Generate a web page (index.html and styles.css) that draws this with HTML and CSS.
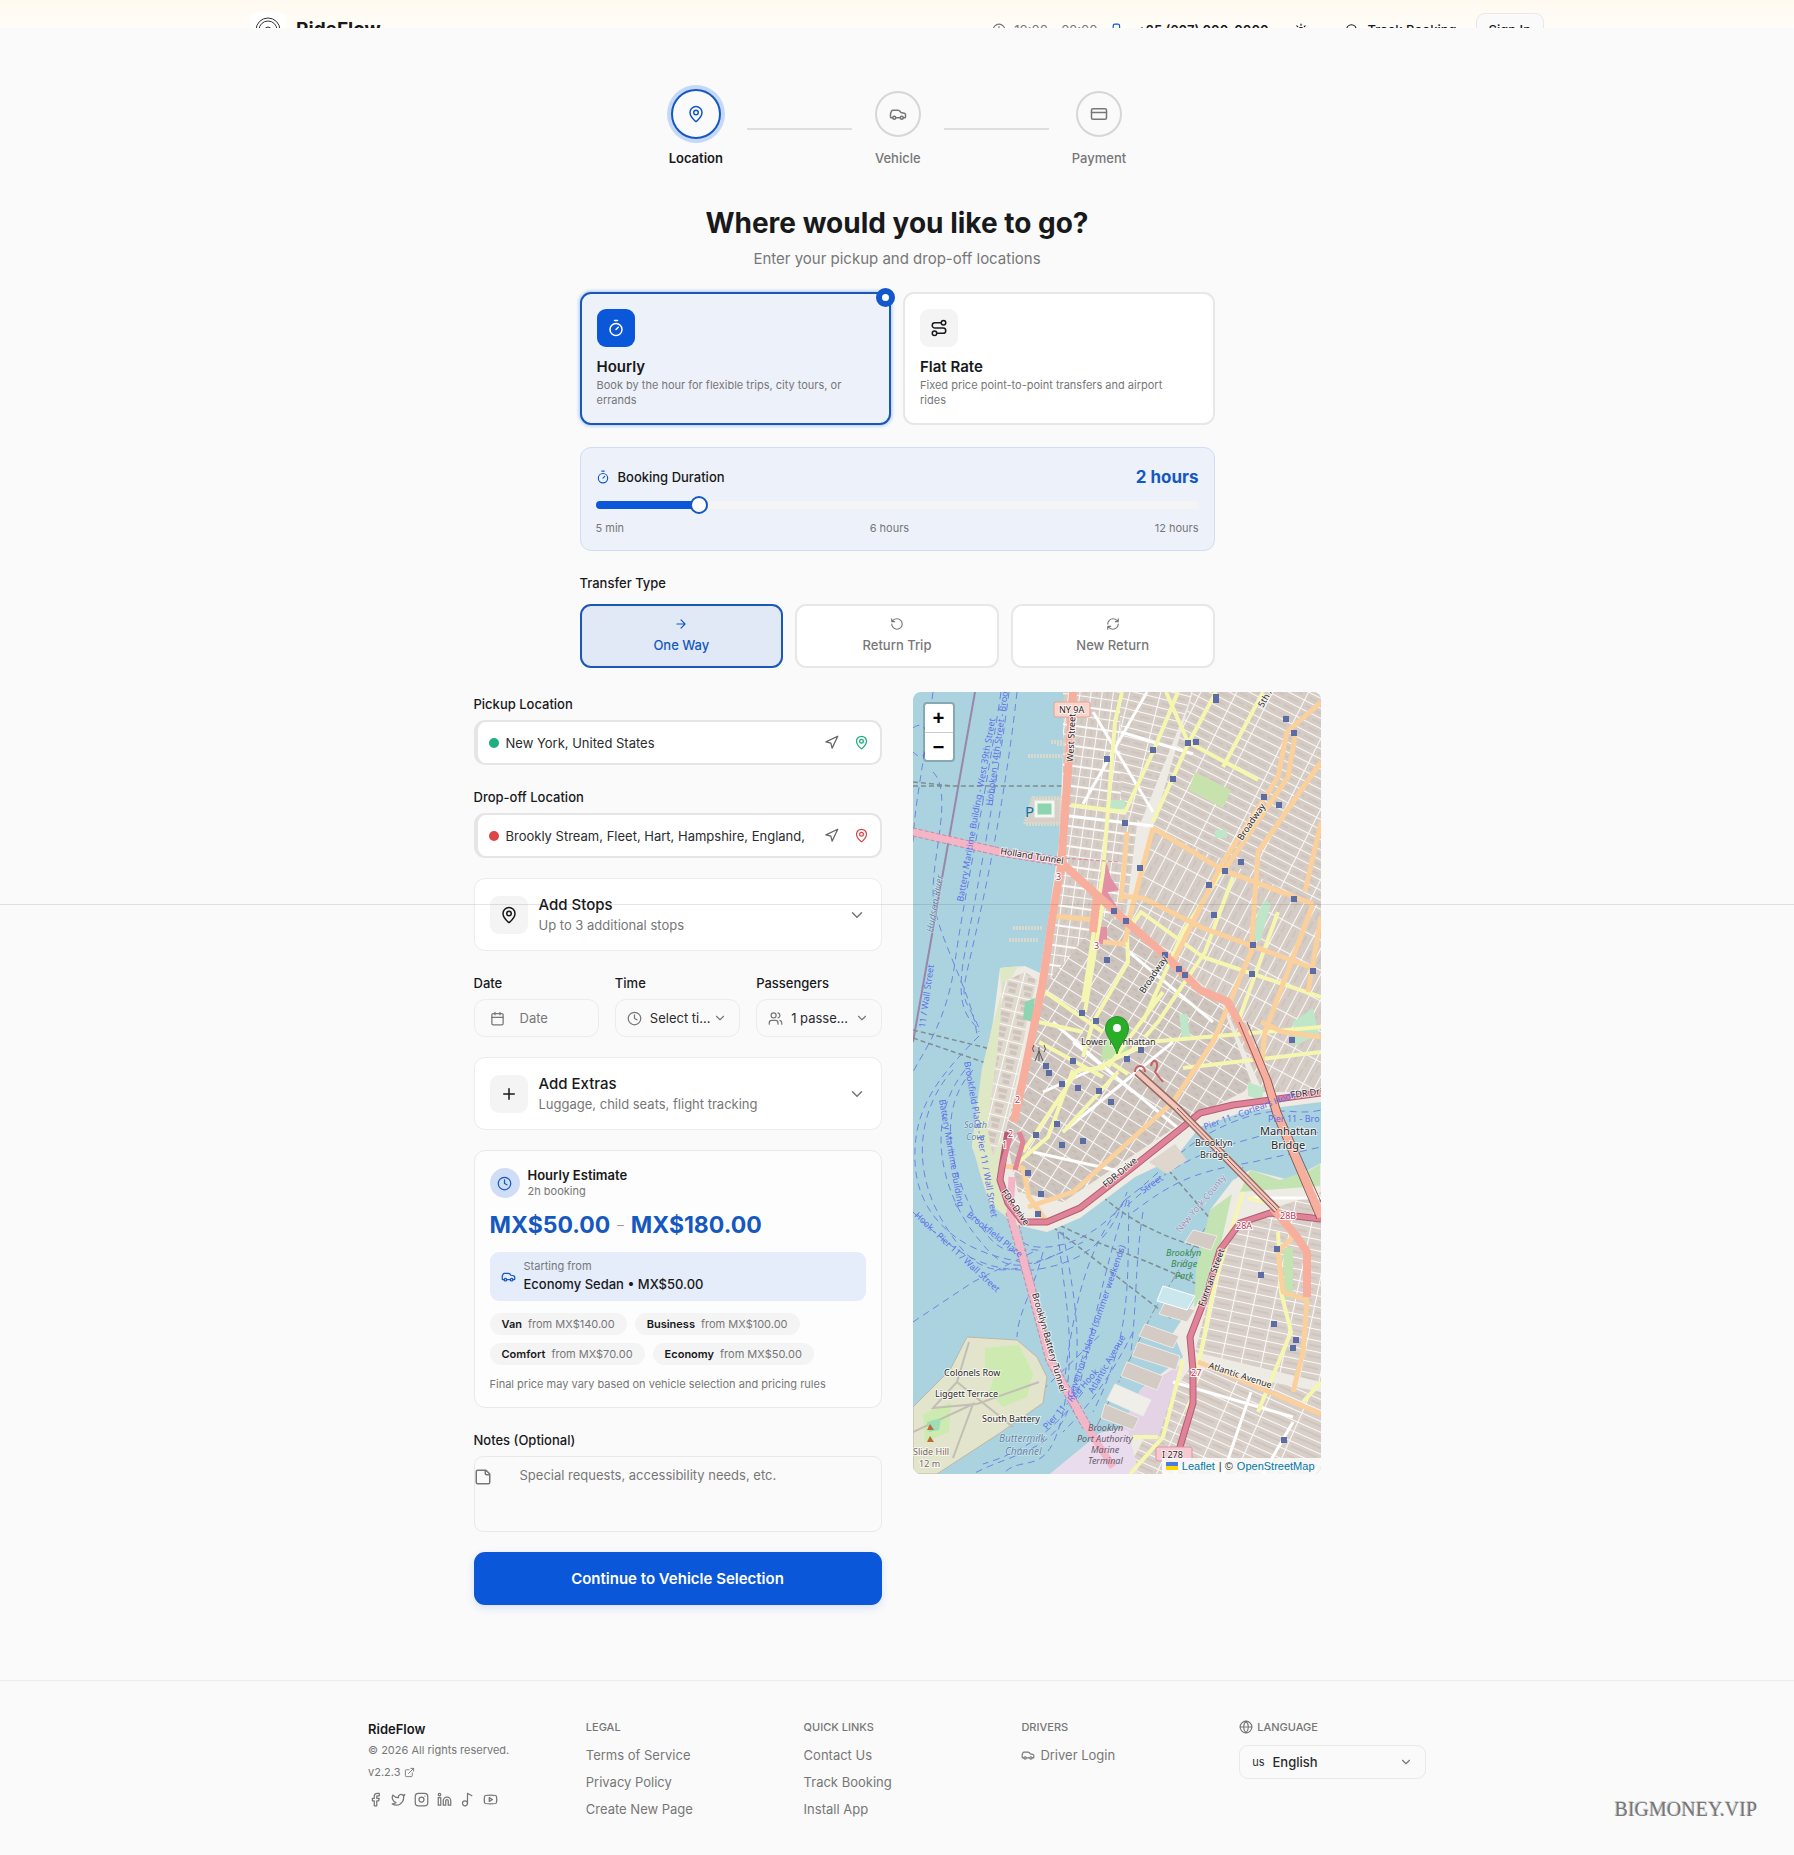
FILE: index.html
```html
<!DOCTYPE html>
<html lang="en">
<head>
<meta charset="utf-8">
<meta name="viewport" content="width=device-width, initial-scale=1">
<title>RideFlow – Book a ride</title>
<link rel="stylesheet" href="styles.css">
</head>
<body>
<svg class="sprite" aria-hidden="true">
  <symbol id="pin" viewBox="0 0 24 24"><path d="M20 10c0 4.993-5.539 10.193-7.399 11.799a1 1 0 0 1-1.202 0C9.539 20.193 4 14.993 4 10a8 8 0 0 1 16 0"/><circle cx="12" cy="10" r="3"/></symbol>
  <symbol id="car" viewBox="0 0 24 24"><path d="M19 17h2c.6 0 1-.4 1-1v-3c0-.9-.7-1.7-1.5-1.9C18.7 10.6 16 10 16 10s-1.3-1.4-2.2-2.3c-.5-.4-1.1-.7-1.8-.7H5c-.6 0-1.1.4-1.4.9l-1.4 2.9A3.7 3.7 0 0 0 2 12v4c0 .6.4 1 1 1h2M9 17h6"/><circle cx="7" cy="17" r="2"/><circle cx="17" cy="17" r="2"/></symbol>
  <symbol id="card" viewBox="0 0 24 24"><rect x="2" y="5" width="20" height="14" rx="2"/><path d="M2 10h20"/></symbol>
  <symbol id="timer" viewBox="0 0 24 24"><path d="M10 2h4M12 14l3-3"/><circle cx="12" cy="14" r="8"/></symbol>
  <symbol id="route" viewBox="0 0 24 24"><circle cx="6" cy="19" r="3"/><path d="M9 19h8.5a3.5 3.5 0 0 0 0-7h-11a3.5 3.5 0 0 1 0-7H15"/><circle cx="18" cy="5" r="3"/></symbol>
  <symbol id="arrow" viewBox="0 0 24 24"><path d="M5 12h14M12 5l7 7-7 7"/></symbol>
  <symbol id="undo" viewBox="0 0 24 24"><path d="M3 12a9 9 0 1 0 9-9 9.750 9.750 0 0 0-6.740 2.740L3 8M3 3v5h5"/></symbol>
  <symbol id="refresh" viewBox="0 0 24 24"><path d="M3 12a9 9 0 0 1 9-9 9.750 9.750 0 0 1 6.740 2.740L21 8M21 3v5h-5M21 12a9 9 0 0 1-9 9 9.750 9.750 0 0 1-6.740-2.740L3 16M8 16H3v5"/></symbol>
  <symbol id="nav" viewBox="0 0 24 24"><path d="M3 11 22 2 13 21 11 13Z"/></symbol>
  <symbol id="chevron" viewBox="0 0 24 24"><path d="m6 9 6 6 6-6"/></symbol>
  <symbol id="calendar" viewBox="0 0 24 24"><path d="M8 2v4M16 2v4M3 10h18"/><rect x="3" y="4" width="18" height="18" rx="2"/></symbol>
  <symbol id="clock" viewBox="0 0 24 24"><circle cx="12" cy="12" r="10"/><path d="M12 6v6l4 2"/></symbol>
  <symbol id="users" viewBox="0 0 24 24"><path d="M16 21v-2a4 4 0 0 0-4-4H6a4 4 0 0 0-4 4v2M22 21v-2a4 4 0 0 0-3-3.870M16 3.130a4 4 0 0 1 0 7.750"/><circle cx="9" cy="7" r="4"/></symbol>
  <symbol id="plus" viewBox="0 0 24 24"><path d="M5 12h14M12 5v14"/></symbol>
  <symbol id="note" viewBox="0 0 24 24"><path d="M16 3H5a2 2 0 0 0-2 2v14a2 2 0 0 0 2 2h14a2 2 0 0 0 2-2V8ZM15 3v4a2 2 0 0 0 2 2h4"/></symbol>
  <symbol id="phone" viewBox="0 0 24 24"><rect x="2" y="2" width="11" height="20" rx="3"/><path d="M7 18h1"/></symbol>
  <symbol id="sun" viewBox="0 0 24 24"><circle cx="12" cy="12" r="4"/><path d="M12 2v2M12 20v2M4.900 4.900l1.400 1.400M17.700 17.700l1.400 1.400M2 12h2M20 12h2M6.300 17.700l-1.400 1.400M19.100 4.900l-1.400 1.400"/></symbol>
  <symbol id="search" viewBox="0 0 24 24"><circle cx="11" cy="11" r="8"/><path d="m21 21-4.300-4.300"/></symbol>
  <symbol id="globe" viewBox="0 0 24 24"><circle cx="12" cy="12" r="10"/><path d="M12 2a14.500 14.500 0 0 0 0 20 14.500 14.500 0 0 0 0-20M2 12h20"/></symbol>
  <symbol id="external" viewBox="0 0 24 24"><path d="M15 3h6v6M10 14 21 3M18 13v6a2 2 0 0 1-2 2H5a2 2 0 0 1-2-2V8a2 2 0 0 1 2-2h6"/></symbol>
  <symbol id="facebook" viewBox="0 0 24 24"><path d="M18 2h-3a5 5 0 0 0-5 5v3H7v4h3v8h4v-8h3l1-4h-4V7a1 1 0 0 1 1-1h3z"/></symbol>
  <symbol id="twitter" viewBox="0 0 24 24"><path d="M22 4s-.7 2.100-2 3.400c1.600 10-9.400 17.300-18 11.600 2.200.1 4.400-.6 6-2C3 15.500.5 9.600 3 5c2.200 2.600 5.600 4.100 9 4-.9-4.200 4-6.600 7-3.800 1.100 0 3-1.200 3-1.200z"/></symbol>
  <symbol id="instagram" viewBox="0 0 24 24"><rect x="2" y="2" width="20" height="20" rx="5"/><circle cx="12" cy="12" r="4"/><path d="M17.500 6.500h.01"/></symbol>
  <symbol id="linkedin" viewBox="0 0 24 24"><path d="M16 8a6 6 0 0 1 6 6v7h-4v-7a2 2 0 0 0-4 0v7h-4v-7a6 6 0 0 1 6-6z"/><rect x="2" y="9" width="4" height="12"/><circle cx="4" cy="4" r="2"/></symbol>
  <symbol id="music" viewBox="0 0 24 24"><circle cx="8" cy="18" r="4"/><path d="M12 18V2l7 4"/></symbol>
  <symbol id="youtube" viewBox="0 0 24 24"><path d="M2.500 17a24 24 0 0 1 0-10 2 2 0 0 1 1.400-1.400 50 50 0 0 1 16.200 0A2 2 0 0 1 21.500 7a24 24 0 0 1 0 10 2 2 0 0 1-1.400 1.400 50 50 0 0 1-16.200 0A2 2 0 0 1 2.500 17M10 15l5-3-5-3z"/></symbol>
</svg>

<header class="topbar">
  <div class="topbar-inner">
    <a class="brand" href="#">
      <span class="brand-mark"><svg viewBox="0 0 26 26"><circle cx="13" cy="13" r="12"/><circle cx="13" cy="13" r="9"/><circle cx="13" cy="13" r="3"/></svg></span>
      RideFlow
    </a>
    <div class="topbar-info">
      <span class="hours"><svg class="i14"><use href="#clock"/></svg>10:00 - 02:00</span>
      <a class="tel" href="#"><svg class="i14"><use href="#phone"/></svg>+25 (607) 000-0000</a>
      <button class="ghost" type="button" aria-label="Theme"><svg class="i14"><use href="#sun"/></svg></button>
      <a class="track" href="#"><svg class="i14"><use href="#search"/></svg>Track Booking</a>
      <a class="signin" href="#">Sign In</a>
    </div>
  </div>
</header>

<main>
  <ol class="stepper">
    <li class="step current"><span class="slot"><span class="bubble"><svg class="i18"><use href="#pin"/></svg></span></span>Location</li>
    <li class="bar"></li>
    <li class="step"><span class="slot"><span class="bubble"><svg class="i18"><use href="#car"/></svg></span></span>Vehicle</li>
    <li class="bar"></li>
    <li class="step"><span class="slot"><span class="bubble"><svg class="i18"><use href="#card"/></svg></span></span>Payment</li>
  </ol>

  <h1>Where would you like to go?</h1>
  <p class="lead">Enter your pickup and drop-off locations</p>

  <section class="options">
    <div class="modes">
      <button class="mode selected" type="button">
        <span class="tile"><svg class="i18"><use href="#timer"/></svg></span>
        <span class="mode-name">Hourly</span>
        <span class="mode-text">Book by the hour for flexible trips, city tours, or errands</span>
        <span class="tick"></span>
      </button>
      <button class="mode" type="button">
        <span class="tile"><svg class="i18"><use href="#route"/></svg></span>
        <span class="mode-name">Flat Rate</span>
        <span class="mode-text">Fixed price point-to-point transfers and airport rides</span>
      </button>
    </div>

    <div class="duration">
      <div class="duration-head">
        <label for="dur"><svg class="i14"><use href="#timer"/></svg>Booking Duration</label>
        <output for="dur">2 hours</output>
      </div>
      <input id="dur" type="range" min="5" max="720" step="5" value="120">
      <div class="scale"><span>5 min</span><span>6 hours</span><span>12 hours</span></div>
    </div>

    <h2 class="group-label">Transfer Type</h2>
    <div class="transfers">
      <button class="transfer selected" type="button"><svg class="i14"><use href="#arrow"/></svg>One Way</button>
      <button class="transfer" type="button"><svg class="i14"><use href="#undo"/></svg>Return Trip</button>
      <button class="transfer" type="button"><svg class="i14"><use href="#refresh"/></svg>New Return</button>
    </div>
  </section>

  <div class="columns">
    <form class="trip">
      <div class="field">
        <label for="from">Pickup Location</label>
        <div class="place from">
          <span class="dot"></span>
          <input id="from" type="text" value="New York, United States">
          <button type="button" aria-label="Use my location"><svg class="i15"><use href="#nav"/></svg></button>
          <button class="pick" type="button" aria-label="Pick on map"><svg class="i15"><use href="#pin"/></svg></button>
        </div>
      </div>
      <div class="field">
        <label for="to">Drop-off Location</label>
        <div class="place to">
          <span class="dot"></span>
          <input id="to" type="text" value="Brookly Stream, Fleet, Hart, Hampshire, England, United Kingdom">
          <button type="button" aria-label="Use my location"><svg class="i15"><use href="#nav"/></svg></button>
          <button class="pick" type="button" aria-label="Pick on map"><svg class="i15"><use href="#pin"/></svg></button>
        </div>
      </div>

      <button class="expander" type="button">
        <span class="tile"><svg class="i18"><use href="#pin"/></svg></span>
        <span class="expander-text"><strong>Add Stops</strong><span>Up to 3 additional stops</span></span>
        <svg class="i18"><use href="#chevron"/></svg>
      </button>

      <div class="when">
        <div class="field">
          <label for="date">Date</label>
          <div class="box date"><svg class="i15"><use href="#calendar"/></svg><input id="date" type="text" placeholder="Date"></div>
        </div>
        <div class="field">
          <label for="time">Time</label>
          <div class="box"><svg class="i15"><use href="#clock"/></svg><select id="time"><option>Select time</option></select><svg class="i14 caret"><use href="#chevron"/></svg></div>
        </div>
        <div class="field">
          <label for="pax">Passengers</label>
          <div class="box"><svg class="i15"><use href="#users"/></svg><select id="pax"><option>1 passenger</option></select><svg class="i14 caret"><use href="#chevron"/></svg></div>
        </div>
      </div>

      <button class="expander" type="button">
        <span class="tile"><svg class="i18"><use href="#plus"/></svg></span>
        <span class="expander-text"><strong>Add Extras</strong><span>Luggage, child seats, flight tracking</span></span>
        <svg class="i18"><use href="#chevron"/></svg>
      </button>

      <section class="estimate">
        <div class="estimate-head">
          <span class="disc"><svg class="i15"><use href="#clock"/></svg></span>
          <div><h3>Hourly Estimate</h3><p>2h booking</p></div>
        </div>
        <p class="price"><b>MX$50.00</b><span>–</span><b>MX$180.00</b></p>
        <div class="starting">
          <svg class="i15"><use href="#car"/></svg>
          <div><p>Starting from</p><strong>Economy Sedan • MX$50.00</strong></div>
        </div>
        <ul class="chips">
          <li><b>Van</b>from MX$140.00</li>
          <li><b>Business</b>from MX$100.00</li>
          <li><b>Comfort</b>from MX$70.00</li>
          <li><b>Economy</b>from MX$50.00</li>
        </ul>
        <p class="fine">Final price may vary based on vehicle selection and pricing rules</p>
      </section>

      <div class="field notes">
        <label for="notes">Notes (Optional)</label>
        <div class="notes-box">
          <svg class="i18"><use href="#note"/></svg>
          <textarea id="notes" placeholder="Special requests, accessibility needs, etc."></textarea>
        </div>
      </div>

      <button class="submit" type="submit">Continue to Vehicle Selection</button>
    </form>

    <div class="map">
      <svg class="tiles" viewBox="0 0 408 782" preserveAspectRatio="xMidYMid slice">
        <defs>
          <pattern id="west" width="11" height="20" patternUnits="userSpaceOnUse" patternTransform="rotate(8)"><rect width="11" height="20" fill="#d5ccc6"/><path d="M0 0H11M0 0V20M0 11H11" stroke="#fbfaf8" stroke-width="2"/><path d="M6 3V8M6 13V18" stroke="#c8bcb4"/></pattern>
          <pattern id="village" width="30" height="9" patternUnits="userSpaceOnUse" patternTransform="rotate(14)"><rect width="30" height="9" fill="#d5ccc6"/><path d="M0 0H30M0 0V9" stroke="#fbfaf8" stroke-width="2"/><path d="M4 5H12M16 5H26" stroke="#c8bcb4"/></pattern>
          <pattern id="east" width="32" height="9" patternUnits="userSpaceOnUse" patternTransform="rotate(27)"><rect width="32" height="9" fill="#d5ccc6"/><path d="M0 0H32M0 0V9" stroke="#fbfaf8" stroke-width="2"/><path d="M4 5H12M16 5H28" stroke="#c8bcb4"/></pattern>
          <pattern id="soho" width="12" height="27" patternUnits="userSpaceOnUse" patternTransform="rotate(28)"><rect width="12" height="27" fill="#d5ccc6"/><path d="M0 0H12M0 0V27" stroke="#fbfaf8" stroke-width="2"/><path d="M6 4V12M5 15V24" stroke="#c8bcb4"/></pattern>
          <pattern id="fidi" width="17" height="13" patternUnits="userSpaceOnUse" patternTransform="rotate(32)"><rect width="17" height="13" fill="#cec4be"/><path d="M0 0H17M0 0V13" stroke="#fbfaf8" stroke-width="2"/><path d="M4 5H8M10 9H14" stroke="#bfb3ab"/></pattern>
          <pattern id="battery" width="16" height="15" patternUnits="userSpaceOnUse" patternTransform="rotate(14)"><rect width="16" height="15" fill="#dfd9cf"/><path d="M3 3h9v4H3zM5 9h7v4H5z" fill="#cfc4bc"/><path d="M0 0H16M0 0V15" stroke="#fbfaf8" stroke-width="2"/></pattern>
          <pattern id="heights" width="20" height="11" patternUnits="userSpaceOnUse" patternTransform="rotate(12)"><rect width="20" height="11" fill="#d8cfc9"/><path d="M0 0H20M0 0V11" stroke="#fbfaf8" stroke-width="2"/><path d="M3 6H17" stroke="#c8bcb4"/></pattern>
          <pattern id="cobble" width="36" height="10" patternUnits="userSpaceOnUse" patternTransform="rotate(24)"><rect width="36" height="10" fill="#d8cfc9"/><path d="M0 0H36M0 0V10" stroke="#fbfaf8" stroke-width="2"/><path d="M4 5H32" stroke="#c8bcb4"/></pattern>
        </defs>
        <rect width="408" height="782" fill="#aad3df"/>

        <!-- Hudson and East River ferry lines -->
        <g class="ferry">
          <path d="M20 0C8 90 2 110 0 150M88 0C70 120 50 210 42 270S10 360 0 380M96 0C86 80 66 190 52 260S66 330 66 340M104 0C92 110 70 210 58 262S50 300 66 336M20 80C40 100 20 160 20 200S60 300 64 344M0 36C20 20 20 80 0 60M66 344C20 390 0 420 2 470S40 560 110 570"/>
          <path d="M60 378C30 410 30 460 60 520S110 550 130 560M52 378C10 430 30 500 60 540S100 580 150 560M40 378C10 410-6 470 30 530S90 590 170 550M0 520C40 560 70 580 120 578 180 570 200 540 214 500M0 630 60 590 120 560M212 508C170 560 160 620 150 700M214 508C190 580 180 640 160 720M216 508C214 590 220 640 180 720M210 512C170 560 120 560 110 550"/>
          <path d="M150 540C160 600 170 640 160 700S100 760 60 782M145 540C150 600 165 650 150 720S110 760 90 782M212 508C250 480 270 450 320 430S380 425 408 418M214 514C260 470 290 460 340 446S390 444 408 440M220 520C260 490 280 480 340 470L408 455M130 560C120 600 105 620 104 645M220 640C200 680 180 710 150 740M170 700C140 740 110 760 70 772M230 520C222 570 224 610 218 660M86 740 190 640"/>
        </g>
        <path d="M62 0 0 350" stroke="#9a86ab" stroke-width="2"/>
        <g fill="none" stroke="#7f8c93" stroke-width="1.500" stroke-dasharray="5 3"><path d="M0 90 40 94H150M0 94H150M0 338 70 355 120 370M0 346 70 370 110 390M140 530C200 560 220 560 300 600M140 535 260 628M190 505C230 540 270 550 300 560M240 460 300 530"/></g>
        <path d="M330 475 240 620 180 742" fill="none" stroke="#8b91a2" stroke-dasharray="10 3 2 3"/>

        <!-- Manhattan -->
        <path d="M150 0H408V410L330 420 287 435 262 466 222 485 167 526 134 540 100 532 77 508 67 475 59 455 65 411 72 370 80 330 87 276 112 274 127 281 137 215 146 150 150 60Z" fill="#eeebe4"/>
        <path d="M150 0H260L228 100 212 230 190 320 120 320 140 215 150 150Z" fill="url(#west)"/>
        <path d="M207 0H280L228 130 208 120Z" fill="url(#village)"/>
        <path d="M280 0H408V240L300 180 240 135 262 60Z" fill="url(#east)"/>
        <path d="M240 135 408 215V400L350 400 310 310 214 230Z" fill="url(#soho)"/>
        <path d="M190 225 214 230 310 315 340 395 270 430 150 510 105 500 92 440 134 290Z" fill="url(#fidi)"/>
        <path d="M282 80l36 18-8 18-34-18z" fill="#c8e2ae"/><g fill="#bfe6c8"><path d="M197 108h15v9h-15zM266 322h8l3 22-8 2zM345 220l7-12 6 4-11 38-7-4zM380 330l20-14 6 26-24 12zM302 138h12v8h-12zM335 390l16 6-2 12-14-4z"/><path d="M190 350l14-8 12 8-4 16-24 2z" fill="#bfe3a8"/><path d="M87 276l18-2-18 32-8 30-10 40-4 30-6 46 8 30 10 30 28 22-4-20-14-30 6-80z" fill="#dfe8c5"/></g>
        <path d="M90 290l22-10 12 8-10 40-8 50-14 60-12 26-6-30 10-70z" fill="url(#battery)"/>
        <path d="M112 310l10-4-3 24-9-3z" fill="#8dd4b0"/>
        <path d="M180 235h14v17h-14z" fill="#e290a5"/><path d="M188 178l6-6 4 14 8 12-20 4zM182 204l10-8 14 22-6 4z" fill="#e290a5"/>
        <path d="M120 106h28v26h-36zM144 52h16M115 64h34M100 236h30M96 248h30M138 50h12" fill="#d6d0c8" stroke="#ddd8cc" stroke-width="4" stroke-dasharray="2 1"/>
        <path d="M123 110h17v14h-17z" fill="#8dd4b0" stroke="#f4f6f2" stroke-width="3"/>
        <path d="M236 470l26-18 12 16-20 14z" fill="#dfd6cd"/>

        <!-- Brooklyn -->
        <path d="M408 471 377 488 337 478 320 488 297 518 307 538 294 578 280 611 260 641 270 665 227 698 217 735 187 741 137 782H408Z" fill="#eeebe4"/>
        <path d="M322 530 408 500V690L282 660 300 590Z" fill="url(#heights)"/>
        <path d="M278 674 408 700V782H212L240 730Z" fill="url(#cobble)"/>
        <path d="M227 698 268 672 244 750 205 742Z" fill="#e4d3e4"/><path d="M187 741 215 738 226 782H137Z" fill="#e9dced"/>
        <path d="M297 518l22-16-20 90-18 24 2-40z" fill="#c4e3b2"/>
        <g fill="#d4cbc4" stroke="#eeeae6"><path d="M225 650l42 14-4 14-44-14zM214 670l36 14-6 14-36-14z"/><path d="M202 692l36 16-8 16-36-16z" fill="#f0eee9"/><path d="M192 712l34 14-6 12-32-12zM252 610l30 8-8 12-28-8zM232 632l34 12-6 12-34-12zM280 538l24 6-6 14-26-8z"/></g>
        <path d="M250 594l32 10-8 14-30-9z" fill="#cbe7ee" stroke="#fff"/>
        <path d="M337 478l30 10 30-10 10-6v22l-80 6zM370 556h10v50h-8z" fill="#c4e3b2"/>

        <!-- Governors Island -->
        <path d="M54 645 104 648 124 665 134 685 130 711 87 741 24 782H0V715L37 678Z" fill="#e2e5cb" stroke="#bcb6aa"/>
        <path d="M72 656l34-3 14 28-6 24-24 10-14-14 6-20-10-6zM10 722l28-12-2 30-24 10z" fill="#cdebb0"/>
        <path d="M56 650 44 690 20 716 64 712 126 690M44 690 100 735M0 740 60 712 40 766" fill="none" stroke="#c2bdb5" stroke-width="2"/>
        <path d="M14 730l14-4-2 12-10 2z" fill="#9fdcb8"/>

        <!-- Streets -->
        <g class="street"><path d="M156 124 240 134M234 0 170 112M180 20 240 120M208 40 280 62M216 260 300 330M140 330 220 400M130 400 240 350M150 440 260 350M120 460 210 480M160 350 270 440M338 700 310 782M380 730 350 782M260 690 380 725M340 506H408"/></g>
        <g class="minor"><path d="M209 0 202 30 190 180 170 310M253 0 275 50 345 88M265 0 240 60 212 120 158 113M303 0 275 52 240 130M350 0 310 75M310 178 270 240 230 330M320 185 292 260 245 330 232 345M214 240 228 220 290 265 408 305M214 242 215 270 180 330 170 365M132 300 190 340M126 330 170 340M126 350 190 385M180 378 235 350 408 335M270 376 408 360M365 220 325 330M190 210 172 320M250 300 195 375M192 376 165 378 110 460M160 378 135 445 100 475M205 380 150 440M200 372 215 382"/><path d="M330 500 302 590 290 650 262 782M335 506 360 512M365 540 368 600 378 640 345 720M270 668 250 745 217 782M220 745H245M408 690 390 710"/></g>
        <g class="secondary"><path d="M408 10 374 40 365 85 310 170 260 270M382 44 375 85 310 180M240 136 310 178 400 212M240 136 218 220 212 250M214 140 208 210M206 204 230 206 290 236 400 276M400 212 352 340 348 378M408 70 345 160 338 260 300 350 260 410 160 500 115 515M408 130 392 200M140 224 182 228M89 474 110 476 116 505 134 530M348 330 370 340 408 345M190 250 212 252M408 225 395 300"/><path d="M365 518 380 545 365 560 370 600 394 608 390 660 380 700M285 670 310 680 408 722"/></g>
        <path d="M99 485 97 521 114 581 137 668 174 735 200 775" class="tunnel"/><path d="M0 140 37 148 87 160 150 170" class="tunnel"/>
        <path d="M0 136 87 156 150 166 206 170M0 144 87 164 150 174" class="tunnel-edge"/><path d="M103 521 118 580 141 667 178 733M93 521 110 582 133 669 170 737" class="tunnel-edge"/>
        <g class="motor-edge"><path d="M95 440 89 475 87 488 95 511 110 530 134 530 167 516 220 475 270 435 287 421 320 413 408 401"/><path d="M264 765 280 711 280 678 277 645 294 601 307 558 327 531 357 521 408 527"/></g>
        <g class="motor"><path d="M97 445 89 475 87 488 95 511 110 530 134 530 167 516 220 475 270 435 287 421 320 413 408 401"/><path d="M264 765 280 711 280 678 277 645 294 601 307 558 327 531 357 521 408 527"/><path d="M106 440 110 450 102 478"/></g>
        <g class="trunk"><path d="M160 0 156 65 150 148 148 175 140 221 129 295 112 378 101 430"/><path d="M150 172 184 203 214 230 254 265 287 298 315 310 330 338 354 388 364 421 408 525"/><path d="M184 203 180 240M360 516 384 545 394 560V605"/></g>
        <path d="M326 330 350 388 360 423 404 527M334 330 358 388 368 420 408 510" fill="none" stroke="#8a5a55"/>
        <path d="M224 380 264 416 364 518" stroke="#986a62" stroke-width="8" fill="none"/><path d="M224 380 264 416 364 518" stroke="#f3c7bc" stroke-width="5" fill="none"/><path d="M264 416 364 518" stroke="#885c57" fill="none"/>
        <path d="M222 380c0-8 10-8 10 0M238 374c2-10 10-4 4 6l8 10" fill="none" stroke="#c65f62" stroke-width="2"/>

        <!-- Subway entrances -->
        <path class="subway" d="M300 2h6v9h-6zM191 64h6v6h-6zM237 55h6v6h-6zM272 48h6v6h-6zM280 47h6v6h-6zM257 84h6v6h-6zM370 24h6v6h-6zM378 38h6v6h-6zM348 102h6v6h-6zM363 110h6v6h-6zM209 128h6v6h-6zM224 173h6v6h-6zM293 190h6v6h-6zM309 176h6v6h-6zM325 167h6v6h-6zM378 204h6v6h-6zM298 220h6v6h-6zM198 216h6v6h-6zM210 226h6v6h-6zM249 260h6v6h-6zM263 274h6v6h-6zM269 280h6v6h-6zM191 265h6v6h-6zM337 250h6v6h-6zM336 279h6v6h-6zM397 276h6v6h-6zM166 318h6v6h-6zM180 326h6v6h-6zM376 345h6v6h-6zM211 364h6v6h-6zM225 355h6v6h-6zM157 366h6v6h-6zM130 371h6v6h-6zM133 378h6v6h-6zM146 389h6v6h-6zM162 393h6v6h-6zM183 396h6v6h-6zM195 407h6v6h-6zM141 429h6v6h-6zM120 440h6v6h-6zM146 450h6v6h-6zM167 446h6v6h-6zM112 478h6v6h-6zM125 499h6v6h-6zM122 519h6v6h-6zM361 554h6v6h-6zM345 580h6v6h-6zM358 629h6v6h-6zM380 645h6v6h-6zM377 653h6v6h-6zM368 745h6v6h-6z"/>

        <!-- Labels -->
        <rect x="141" y="10" width="36" height="15" rx="2" fill="#fbd5cb" stroke="#e2a596"/><rect x="243" y="755" width="36" height="14" rx="2" fill="#f6c8d2" stroke="#d995a6"/>
        <g class="names">
          <text x="146" y="21">NY 9A</text><text x="249" y="766">I 278</text>
          <text transform="translate(160 70) rotate(-87)">West Street</text>
          <text transform="translate(87 162) rotate(9)">Holland Tunnel</text>
          <text transform="translate(329 149) rotate(-56)">Broadway</text>
          <text transform="translate(231 302) rotate(-56)">Broadway</text>
          <text transform="translate(350 16) rotate(-60)">5th Ave</text>
          <text x="168" y="353">Lower Manhattan</text>
          <text transform="translate(193 496) rotate(-40)">FDR Drive</text>
          <text transform="translate(88 500) rotate(55)">FDR Drive</text>
          <text transform="translate(378 406) rotate(-7)">FDR Drive</text>
          <text transform="translate(119 602) rotate(74)">Brooklyn-Battery Tunnel</text>
          <text transform="translate(291 615) rotate(-70)">Furman Street</text>
          <text transform="translate(295 676) rotate(18)">Atlantic Avenue</text>
          <text x="31" y="684">Colonels Row</text><text x="22" y="705">Liggett Terrace</text><text x="69" y="730">South Battery</text>
          <text x="282" y="454">Brooklyn</text><text x="287" y="466">Bridge</text>
          <text x="0" y="763" class="soft">Slide Hill</text><text x="6" y="775" class="soft">12 m</text>
          <text x="347" y="443" class="big">Manhattan</text><text x="358" y="457" class="big">Bridge</text>
        </g>
        <g class="red"><text x="143" y="188">3</text><text x="181" y="257">3</text><text x="102" y="411">2</text><text x="95" y="445">2</text><text x="89" y="456">1</text><text x="323" y="537">28A</text><text x="367" y="527">28B</text><text x="278" y="684">27</text></g>
        <g class="water"><text transform="translate(20 241) rotate(-80)" class="big">Hudson River</text><text x="51" y="436">South</text><text x="53" y="448">Cove</text><text x="86" y="750" class="big">Buttermilk</text><text x="92" y="763" class="big">Channel</text><text transform="translate(267 541) rotate(-50)" class="county">New York County</text></g>
        <g class="park"><text x="253" y="564">Brooklyn</text><text x="258" y="575">Bridge</text><text x="262" y="587">Park</text></g>
        <g class="works"><text x="175" y="739">Brooklyn</text><text x="164" y="750">Port Authority</text><text x="178" y="761">Marine</text><text x="175" y="772">Terminal</text></g>
        <g class="route-name">
          <text transform="translate(50 210) rotate(-80)">Battery Maritime Building - West 39th Street</text>
          <text transform="translate(79 114) rotate(-82)">Hoboken 14th Street - Brookfield</text>
          <text transform="translate(12 336) rotate(-82)">11 / Wall Street</text>
          <text transform="translate(26 408) rotate(80)">Battery Maritime Building</text>
          <text transform="translate(51 370) rotate(80)">Brookfield Place - Pier 11 / Wall Street</text>
          <text transform="translate(53 524) rotate(38)">Brookfield Place</text>
          <text transform="translate(1 524) rotate(43)">Hook - Pier 11 / Wall Street</text>
          <text transform="translate(160 706) rotate(-71)">Governors Island (summer weekends)</text>
          <text transform="translate(180 702) rotate(-60)">Atlantic Avenue</text>
          <text transform="translate(134 738) rotate(-48)">Pier 11 - Red Hook</text>
          <text transform="translate(292 438) rotate(-20)">Pier 11 - Corlears Hook</text>
          <text x="355" y="430">Pier 11 - Bro</text>
          <text transform="translate(230 502) rotate(-35)">Street</text>
        </g>
        <text x="112" y="125" fill="#0b76ad" font-size="15">P</text>
        <g fill="#b96c35"><path d="M14 738l3-6 4 6zM14 750l3-6 4 6z"/></g>
        <path d="M126 355v14M122 369l4-10 4 10M121 353q-3 4 0 7M131 353q3 4 0 7" stroke="#555" fill="none"/>

        <!-- Pickup marker -->
        <path d="M204 362C201 350 192.500 346 192.500 336a11.500 11.500 0 0 1 23 0C215.500 346 207 350 204 362Z" fill="#2aad27" stroke="#24922a"/><circle cx="204" cy="336" r="4" fill="#fff"/>
      </svg>
      <div class="zoom-control"><button type="button" aria-label="Zoom in">+</button><button type="button" aria-label="Zoom out">−</button></div>
      <div class="credit"><svg viewBox="0 0 12 8"><path fill="#4C7BE1" d="M0 0h12v4H0z"/><path fill="#FFD500" d="M0 4h12v4H0z"/></svg><a href="#">Leaflet</a> | © <a href="#">OpenStreetMap</a></div>
    </div>
  </div>
</main>

<footer>
  <div class="foot">
    <div class="about">
      <strong>RideFlow</strong>
      <p>© 2026 All rights reserved.</p>
      <a class="version" href="#">v2.2.3 <svg class="i11"><use href="#external"/></svg></a>
      <div class="social">
        <a href="#" aria-label="Facebook"><svg class="i15"><use href="#facebook"/></svg></a>
        <a href="#" aria-label="Twitter"><svg class="i15"><use href="#twitter"/></svg></a>
        <a href="#" aria-label="Instagram"><svg class="i15"><use href="#instagram"/></svg></a>
        <a href="#" aria-label="LinkedIn"><svg class="i15"><use href="#linkedin"/></svg></a>
        <a href="#" aria-label="TikTok"><svg class="i15"><use href="#music"/></svg></a>
        <a href="#" aria-label="YouTube"><svg class="i15"><use href="#youtube"/></svg></a>
      </div>
    </div>
    <nav><h4>LEGAL</h4><a href="#">Terms of Service</a><a href="#">Privacy Policy</a><a href="#">Create New Page</a></nav>
    <nav><h4>QUICK LINKS</h4><a href="#">Contact Us</a><a href="#">Track Booking</a><a href="#">Install App</a></nav>
    <nav><h4>DRIVERS</h4><a href="#"><svg class="i14"><use href="#car"/></svg>Driver Login</a></nav>
    <div class="lang">
      <h4><svg class="i14"><use href="#globe"/></svg><label for="lang">LANGUAGE</label></h4>
      <div class="lang-box"><span>us</span><select id="lang"><option>English</option></select><svg class="i14"><use href="#chevron"/></svg></div>
    </div>
  </div>
</footer>
<div class="seam"></div>
<div class="stamp">BIGMONEY.VIP</div>
</body>
</html>
```
FILE: styles.css
```css
* { box-sizing: border-box; }
body, h1, h2, h3, h4, p, ul, ol { margin: 0; padding: 0; }
body {
  position: relative;
  background: #fafafa;
  color: #18191b;
  font-family: Inter, "Liberation Sans", sans-serif;
  font-size: 13px;
  line-height: 20px;
}
a { color: inherit; text-decoration: none; }
ul, ol { list-style: none; }
button, input, select, textarea { font: inherit; color: inherit; }
button { background: none; border: 0; padding: 0; cursor: pointer; }
input, select, textarea { min-width: 0; border: 0; padding: 0; background: transparent; outline: 0; }
select { appearance: none; text-overflow: ellipsis; overflow: hidden; white-space: nowrap; }
svg { display: block; flex: none; }
.sprite { display: none; }
.i11, .i14, .i15, .i18 { fill: none; stroke: currentColor; stroke-width: 2; stroke-linecap: round; stroke-linejoin: round; }
.i11 { width: 11px; height: 11px; }
.i14 { width: 14px; height: 14px; }
.i15 { width: 15px; height: 15px; }
.i18 { width: 18px; height: 18px; }

/* Top bar */
.topbar { height: 28px; overflow: hidden; background: linear-gradient(#fff9f0, #fffdf8); }
.topbar-inner { display: flex; align-items: center; justify-content: space-between; max-width: 1294px; height: 60px; margin: 0 auto; }
.brand { display: flex; align-items: center; gap: 10px; font-size: 19px; font-weight: 700; }
.brand-mark { display: grid; place-items: center; width: 36px; height: 36px; border-radius: 8px; background: #fff; }
.brand-mark svg { width: 26px; height: 26px; fill: none; stroke: #333; }
.topbar-info { display: flex; align-items: center; font-weight: 600; }
.topbar-info > * { display: flex; align-items: center; }
.hours { gap: 8px; color: #777; font-weight: 400; }
.tel { gap: 11px; margin-left: 15px; }
.tel svg { color: #0b57d9; }
.ghost { margin-left: 25px; }
.track { gap: 9px; margin-left: 37px; font-weight: 500; }
.signin { height: 34px; margin-left: 19px; padding: 0 12px; border: 1px solid #e8e8e8; border-radius: 9px; background: #fafafa; font-weight: 500; }

main { padding: 61px 24px 75px; }

/* Stepper */
.stepper { display: flex; align-items: center; justify-content: center; gap: 23px; }
.step { display: flex; flex-direction: column; align-items: center; gap: 9px; color: #777; font-weight: 500; }
.slot { display: grid; place-items: center; height: 50px; }
.bubble { display: grid; place-items: center; width: 46px; height: 46px; border: 2px solid #d6d6d6; border-radius: 50%; }
.current { color: #18191b; font-weight: 600; }
.current .slot { width: 56px; }
.current .bubble { width: 50px; height: 50px; border-color: #1558c0; background: #fafafa; color: #1558c0; box-shadow: 0 0 0 4px #c5d8f8; }
.bar { width: 105px; height: 2px; background: #dedede; }

h1 { margin-top: 37px; font-size: 28px; line-height: 36px; font-weight: 700; text-align: center; }
.lead { margin-top: 6px; color: #777; font-size: 15px; line-height: 24px; text-align: center; }

/* Ride mode, duration, transfer */
.options { max-width: 635px; margin: 21px auto 0; }
.modes { display: grid; grid-template-columns: 1fr 1fr; gap: 12px; }
.mode { position: relative; display: flex; flex-direction: column; align-items: flex-start; padding: 15px; border: 2px solid #e7e7e7; border-radius: 11px; background: #fff; text-align: left; }
.tile { display: grid; place-items: center; flex: none; width: 38px; height: 38px; border-radius: 9px; background: #f4f4f5; }
.mode-name { margin-top: 10px; font-size: 15px; font-weight: 600; }
.mode-text { max-width: 264px; margin-top: 1px; color: #777; font-size: 11px; line-height: 15px; }
.mode.selected { border-color: #1a58b8; background: #edf1fa; box-shadow: 0 0 4px #7fb0f5; }
.selected .tile { background: #0b57d9; color: #fff; }
.tick { position: absolute; top: -6px; right: -6px; width: 19px; height: 19px; border: 6px solid #1257cc; border-radius: 50%; background: #fff; }

.duration { margin-top: 22px; padding: 16px 15px 14px; border: 1px solid #d0ddf3; border-radius: 11px; background: #edf1fa; }
.duration-head { display: flex; align-items: center; justify-content: space-between; height: 26px; }
.duration label { display: flex; align-items: center; gap: 8px; font-weight: 500; }
.duration label svg { color: #1558c0; }
.duration output { color: #1558c0; font-size: 17px; font-weight: 700; }
.duration input { appearance: none; display: block; width: 100%; height: 18px; margin: 6px 0; }
.duration input::-webkit-slider-runnable-track { height: 8px; border-radius: 4px; background: linear-gradient(90deg, #0b57d9 17%, #f4f4f5 17%); }
.duration input::-webkit-slider-thumb { appearance: none; width: 18px; height: 18px; margin-top: -5px; border: 2px solid #1558c0; border-radius: 50%; background: #fff; }
.scale { display: flex; justify-content: space-between; color: #777; font-size: 11px; line-height: 16px; }

.group-label { margin-top: 22px; font-size: 13px; font-weight: 500; }
.transfers { display: grid; grid-template-columns: repeat(3, 1fr); gap: 12px; margin-top: 11px; }
.transfer { display: flex; flex-direction: column; align-items: center; gap: 4px; padding: 11px; border: 2px solid #e7e7e7; border-radius: 11px; background: #fff; color: #777; font-weight: 500; }
.transfer.selected { border-color: #1a58b8; background: #e1e9f7; color: #1558c0; }

/* Form and map */
.columns { display: grid; grid-template-columns: 1fr 1fr; align-items: start; gap: 31px; max-width: 847px; margin: 24px auto 0; }
.trip { display: flex; flex-direction: column; gap: 20px; min-width: 0; }
.field { display: flex; flex-direction: column; gap: 4px; min-width: 0; }
.field label { font-weight: 500; line-height: 24px; }
.place { display: flex; align-items: center; height: 45px; padding: 0 11px; border: 2px solid #e5e5e5; border-left-width: 4px; border-radius: 11px; background: #fff; }
.dot { flex: none; width: 10px; height: 10px; margin-right: 7px; border-radius: 50%; background: currentColor; }
.place input { flex: 1; margin-right: 15px; color: #2b2c2e; }
.place button { color: #666; }
.place .pick { margin-left: 15px; color: inherit; }
.from { color: #1fae80; }
.to { color: #dc4646; }

.expander { display: flex; align-items: center; gap: 11px; height: 73px; padding: 0 15px; border: 1px solid #ececec; border-radius: 11px; background: #fff; text-align: left; }
.expander-text { flex: 1; display: flex; flex-direction: column; color: #777; line-height: 20px; }
.expander-text strong { color: #18191b; font-size: 15px; font-weight: 500; }
.expander > svg { color: #777; }

.when { display: grid; grid-template-columns: repeat(3, 1fr); gap: 16px; }
.box { display: flex; align-items: center; gap: 8px; height: 38px; padding: 0 12px 0 11px; border: 1px solid #ececec; border-radius: 11px; color: #777; }
.box select, .box input { flex: 1; width: 0; color: #2b2c2e; }
.box .caret { margin: 0 0 0 -7px; }
.date { gap: 15px; padding-left: 15px; }
::placeholder { color: #777; opacity: 1; font-weight: 400; }

.estimate { padding: 16px 15px 14px; border: 1px solid #e9e9ea; border-radius: 11px; background: #fdfdfd; }
.estimate-head { display: flex; align-items: center; gap: 8px; }
.estimate-head h3 { font-size: 13px; line-height: 17px; font-weight: 600; }
.estimate-head p { color: #777; font-size: 11px; line-height: 15px; }
.disc { display: grid; place-items: center; width: 30px; height: 30px; border-radius: 50%; background: #cfddf7; color: #1558c0; }
.price { display: flex; align-items: center; gap: 7px; margin-top: 11px; color: #1558c0; font-size: 23px; line-height: 30px; }
.price span { color: #999; font-size: 13px; }
.starting { display: flex; align-items: center; gap: 8px; margin-top: 12px; padding: 7px 11px; border-radius: 9px; background: #e5ecfa; }
.starting svg { color: #1558c0; }
.starting p { color: #777; font-size: 11px; line-height: 15px; }
.starting strong { display: block; font-weight: 500; }
.chips { display: flex; flex-wrap: wrap; gap: 8px; margin-top: 12px; color: #777; font-size: 11px; line-height: 22px; }
.chips li { display: flex; gap: 6px; padding: 0 12px; border-radius: 11px; background: #f4f4f5; }
.chips b { color: #18191b; font-weight: 600; }
.fine { margin-top: 11px; color: #777; font-size: 11px; line-height: 17px; }

.notes-box { position: relative; display: flex; height: 76px; }
.notes-box svg { position: absolute; top: 12px; left: 0; color: #777; }
.notes-box textarea { flex: 1; padding: 8px 16px 8px 45px; border: 1px solid #e9e9e9; border-radius: 9px; resize: none; }
.submit { height: 53px; border-radius: 11px; background: #0b57d9; color: #fff; font-size: 15px; font-weight: 600; box-shadow: 0 3px 8px #0b57d926; }

.map { position: relative; height: 782px; overflow: hidden; border-radius: 8px; }
.tiles { width: 100%; height: 100%; }
.ferry { fill: none; stroke: #7083e3; stroke-dasharray: 7 5; }
.street, .minor, .secondary, .motor, .motor-edge, .trunk, .tunnel, .tunnel-edge { fill: none; stroke-linejoin: round; }
.street { stroke: #fff; stroke-width: 3; }
.minor { stroke: #f5f6b0; stroke-width: 4; }
.secondary { stroke: #fad09c; stroke-width: 5; }
.tunnel { stroke: #f4b5c7; stroke-width: 7; }
.tunnel-edge { stroke: #d9839a; stroke-dasharray: 4 2; }
.motor-edge { stroke: #b85a72; stroke-width: 7; }
.motor { stroke: #df8398; stroke-width: 5; }
.trunk { stroke: #f8ae9c; stroke-width: 8; }
.subway { fill: #5c6ca5; }
.tiles text { font-family: "Noto Sans", sans-serif; }
.names { fill: #2c2a29; stroke: #ffffffb0; stroke-width: 2; paint-order: stroke; font-size: 9px; }
.names .big { font-size: 11px; }
.names .soft { fill: #7b6a5f; }
.red { fill: #b23a55; stroke: #fff; stroke-width: 2; paint-order: stroke; font-size: 9px; }
.water { fill: #6484a8; stroke: #ffffff90; stroke-width: 1; paint-order: stroke; font-size: 9px; font-style: italic; }
.water .big { font-size: 10px; }
.water .county { fill: #a28bb5; font-style: normal; }
.park { fill: #338a45; font-size: 9px; font-style: italic; }
.works { fill: #69586c; font-size: 9px; font-style: italic; }
.route-name { fill: #5f70ea; font-size: 9px; }

.zoom-control { position: absolute; top: 10px; left: 10px; display: flex; flex-direction: column; width: 32px; border: 2px solid #00000033; border-radius: 4px; background: #fff; background-clip: padding-box; color: #000; }
.zoom-control button { height: 28px; font: 700 20px/31px "Liberation Mono", monospace; }
.zoom-control button + button { border-top: 1px solid #ccc; }
.credit { position: absolute; right: 0; bottom: 0; display: flex; align-items: center; gap: 4px; height: 16px; padding: 0 6px 0 4px; background: #ffffffcc; color: #333; font-family: "Liberation Sans", sans-serif; font-size: 11px; }
.credit svg { width: 12px; height: 8px; }
.credit a { color: #0078a8; }

/* Footer */
footer { padding: 38px 24px 34px; border-top: 1px solid #ececec; color: #777; }
.foot { display: grid; grid-template-columns: repeat(5, 1fr); gap: 31px; max-width: 1058px; margin: 0 auto; }
.about { display: flex; flex-direction: column; font-size: 11px; line-height: 16px; }
.about strong { margin-bottom: 3px; color: #18191b; font-size: 13px; line-height: 20px; font-weight: 600; }
.version { display: flex; align-items: center; gap: 4px; margin-top: 6px; }
.social { display: flex; gap: 8px; margin-top: 12px; }
nav, .lang { display: flex; flex-direction: column; gap: 7px; }
nav a { display: flex; align-items: center; gap: 5px; }
h4 { display: flex; align-items: center; gap: 4px; margin-bottom: 3px; font-size: 11px; line-height: 16px; font-weight: 500; }
.lang-box { display: flex; align-items: center; gap: 8px; height: 34px; padding: 0 12px; border: 1px solid #e9e9e9; border-radius: 9px; }
.lang-box span { color: #2b2c2e; font-size: 11px; }
.lang-box select { flex: 1; color: #2b2c2e; font-weight: 500; }

.seam { position: absolute; top: 904px; left: 0; right: 0; height: 1px; background: #0000001a; pointer-events: none; }
.stamp { position: absolute; right: 37px; bottom: 34px; color: #777; font-family: "Liberation Serif", serif; font-size: 20px; text-shadow: -1px -1px 0 #ccc; }
```
